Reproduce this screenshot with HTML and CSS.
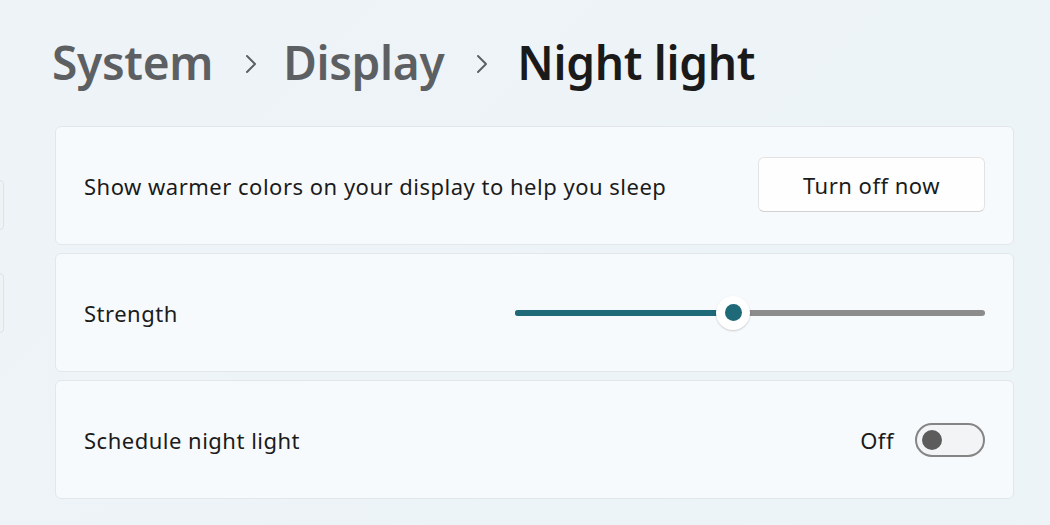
FILE: index.html
```html
<!DOCTYPE html>
<html lang="en">
<head>
  <meta charset="UTF-8">
  <title>Night light</title>
  <link rel="stylesheet" href="styles.css">
</head>
<body>

  <div class="nav-edge nav-edge-1"></div>
  <div class="nav-edge nav-edge-2"></div>

  <main class="page">
    <h1 class="crumbs">
      <span class="crumb">System</span>
      <span class="sep">
        <svg width="14" height="20" viewBox="0 0 14 20"><path d="M3 2 L11 10 L3 18" fill="none" stroke="currentColor" stroke-width="2" stroke-linecap="round" stroke-linejoin="round"/></svg>
      </span>
      <span class="crumb">Display</span>
      <span class="sep">
        <svg width="14" height="20" viewBox="0 0 14 20"><path d="M3 2 L11 10 L3 18" fill="none" stroke="currentColor" stroke-width="2" stroke-linecap="round" stroke-linejoin="round"/></svg>
      </span>
      <span class="crumb current">Night light</span>
    </h1>

    <section class="cards">
      <div class="card">
        <span class="label">Show warmer colors on your display to help you sleep</span>
        <button class="btn">Turn off now</button>
      </div>

      <div class="card">
        <span class="label">Strength</span>
        <div class="slider">
          <div class="track-fill" style="width: 46.4%"></div>
          <div class="thumb" style="left: 46.4%"><span class="thumb-dot"></span></div>
        </div>
      </div>

      <div class="card">
        <span class="label">Schedule night light</span>
        <div class="toggle-wrap">
          <span class="state">Off</span>
          <span class="toggle"><span class="knob"></span></span>
        </div>
      </div>
    </section>
  </main>

</body>
</html>
```

FILE: styles.css
```css
body {
  margin: 0;
  width: 1050px;
  height: 525px;
  overflow: hidden;
  font-family: "Noto Sans", "Open Sans", sans-serif;
  background: linear-gradient(135deg, #eef3f7 0%, #ecf4f8 100%);
  color: #1b1b1b;
  position: relative;
}
.nav-edge {
  position: absolute;
  left: -6px;
  width: 8px;
  border: 1px solid #dde3e8;
  border-radius: 4px;
  background: #eef3f6;
}
.nav-edge-1 {
  top: 180px;
  height: 48px;
}
.nav-edge-2 {
  top: 273px;
  height: 58px;
}
.page {
  padding: 0 36px 0 55px;
}
.crumbs {
  display: flex;
  align-items: center;
  margin: 0;
  height: 126px;
  padding-bottom: 2px;
  box-sizing: border-box;
  font-size: 46px;
  font-weight: 600;
  letter-spacing: -0.3px;
}
.crumb {
  color: #5d6063;
  margin-left: -3px;
}
.crumb.current {
  color: #1a1a1a;
  margin-left: 0;
}
.sep {
  display: flex;
  color: #5d6063;
  margin: 0 28px 0 31px;
  padding-top: 4px;
}
.cards {
  display: flex;
  flex-direction: column;
  gap: 8px;
}
.card {
  height: 119px;
  box-sizing: border-box;
  background: #f7fafc;
  border: 1px solid #e2e7eb;
  border-radius: 6px;
  display: flex;
  align-items: center;
  justify-content: space-between;
  padding: 0 28px 0 28px;
}
.label,
.state,
.btn {
  font-size: 22px;
  letter-spacing: 0.5px;
  color: #1b1b1b;
}
.btn {
  width: 227px;
  height: 55px;
  background: #fefefe;
  border: 1px solid #e3e3e3;
  border-bottom-color: #d2d2d2;
  border-radius: 6px;
  font-family: inherit;
  margin-top: -2px;
}
.slider {
  position: relative;
  width: 470px;
  height: 6px;
  border-radius: 3px;
  background: #8c8c8c;
  margin-top: 0;
}
.track-fill {
  height: 6px;
  border-radius: 3px;
  background: #1e6a78;
}
.thumb {
  position: absolute;
  top: 3px;
  width: 34px;
  height: 34px;
  margin: -17px 0 0 -17px;
  border-radius: 50%;
  background: #ffffff;
  box-shadow: 0 1px 2px rgba(0, 0, 0, 0.18);
  display: flex;
  align-items: center;
  justify-content: center;
}
.thumb-dot {
  width: 17px;
  height: 17px;
  border-radius: 50%;
  background: #1e6a78;
}
.toggle-wrap {
  display: flex;
  align-items: center;
  gap: 21px;
}
.toggle {
  width: 70px;
  height: 34px;
  box-sizing: border-box;
  border: 2px solid #858585;
  border-radius: 17px;
  background: #f2f4f5;
  display: flex;
  align-items: center;
  padding-left: 5px;
}
.knob {
  width: 20px;
  height: 20px;
  border-radius: 50%;
  background: #5c5c5c;
}
```
